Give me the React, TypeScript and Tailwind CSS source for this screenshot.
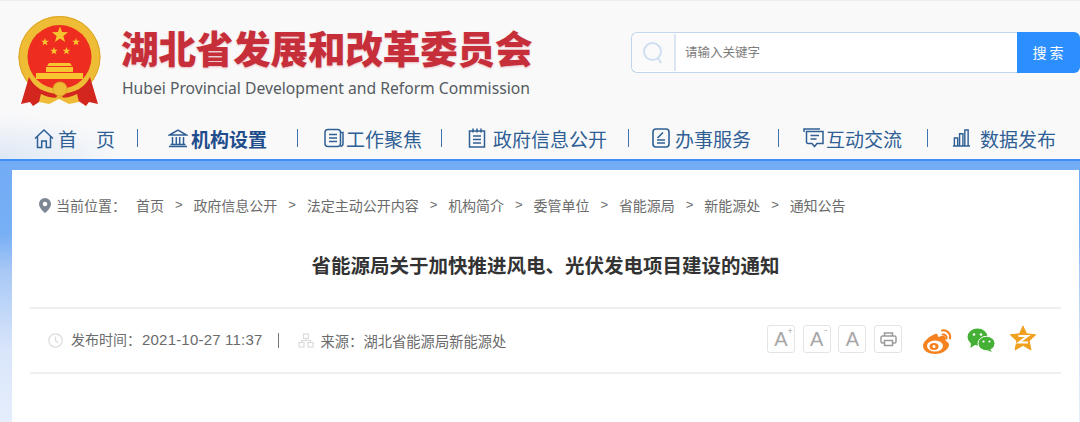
import React from 'react';

const cjk = '"Noto Sans CJK SC", sans-serif';
const latin = '"Liberation Sans", sans-serif';

const icons = {
  home: (
    <svg width="20" height="21" viewBox="0 0 20 21" fill="none" stroke="#2f5f94" strokeWidth="1.5">
      <path d="M1 10.500 10 2l9 8.500M3.500 8.500v11h4.200V13h4.600v6.500h4.200v-11" />
    </svg>
  ),
  bank: (
    <svg width="20" height="20" viewBox="0 0 20 20" fill="none" stroke="#2f5f94" strokeWidth="1.5">
      <path d="M1.500 7 10 2l8.500 5zM4.500 9v7M8.300 9v7M11.700 9v7M15.500 9v7M2.500 16.500h15M1 18.500h18" />
    </svg>
  ),
  doc: (
    <svg width="20" height="20" viewBox="0 0 20 20" fill="none" stroke="#2f5f94" strokeWidth="1.5">
      <rect x="1" y="1.500" width="15.500" height="17" rx="3" />
      <path d="M16.500 4.500H19v11a3 3 0 0 1-2.500 3M5 6.500h8M5 10h8M5 13.500h8" />
    </svg>
  ),
  list: (
    <svg width="18" height="20" viewBox="0 0 18 20" fill="none" stroke="#2f5f94" strokeWidth="1.5">
      <rect x="1.500" y="3" width="15" height="16" />
      <path d="M5 0.500v4M9 0.500v4M13 0.500v4M5 8h8M5 11.500h8M5 15h8" />
    </svg>
  ),
  edit: (
    <svg width="18" height="20" viewBox="0 0 18 20" fill="none" stroke="#2f5f94" strokeWidth="1.6">
      <rect x="1" y="1" width="16" height="18" rx="3" />
      <path d="M5 15h8M5 12h8M5.500 10 11 4.500" />
    </svg>
  ),
  chat: (
    <svg width="21" height="20" viewBox="0 0 21 20" fill="none" stroke="#2f5f94" strokeWidth="1.5">
      <path d="M1 4V1h16" />
      <path d="M3.500 3.500H20v12h-6l-2.500 3-2.500-3H5a1.500 1.500 0 0 1-1.500-1.500zM7.500 7.500h8.500M7.500 11h6" />
    </svg>
  ),
  bars: (
    <svg width="20" height="20" viewBox="0 0 20 20" fill="none" stroke="#2f5f94" strokeWidth="1.5">
      <path d="M1 18.500h18M2.500 18.500V10h3.500v8.500M8 18.500V5.500h3.500v13M13.500 18.500V1.500H17v17" />
    </svg>
  ),
};

const navItems = [
  { icon: icons.home, label: '首\u3000页', className: 'w-[104px] gap-[4px]' },
  { icon: icons.bank, label: '机构设置', className: 'w-[160px] pl-[30px] gap-[3px]', active: true },
  { icon: icons.doc, label: '工作聚焦', className: 'w-[144px] pl-[26px] gap-[2px]' },
  { icon: icons.list, label: '政府信息公开', className: 'w-[187px] pl-[26px] gap-[7px]' },
  { icon: icons.edit, label: '办事服务', className: 'w-[150px] pl-[23px] gap-[5px]' },
  { icon: icons.chat, label: '互动交流', className: 'w-[149px] pl-[24px] gap-[2px]' },
  { icon: icons.bars, label: '数据发布', className: 'w-[128px] pl-[24px] gap-[9px]' },
];

const crumbs = ['首页', '政府信息公开', '法定主动公开内容', '机构简介', '委管单位', '省能源局', '新能源处', '通知公告'];

const starPoints = (cx: number, cy: number, r: number) =>
  Array.from({ length: 10 }, (_, i) => {
    const a = (Math.PI / 5) * i - Math.PI / 2;
    const d = i % 2 === 0 ? r : r * 0.42;
    return `${cx + d * Math.cos(a)},${cy + d * Math.sin(a)}`;
  }).join(' ');

const Emblem = () => (
  <svg width="84" height="94" viewBox="0 0 84 94" className="shrink-0">
    <circle cx="42.500" cy="42" r="41" fill="#efbd35" />
    <circle cx="42.500" cy="42" r="40.500" fill="none" stroke="#dca326" />
    <circle cx="42.500" cy="42" r="32" fill="#ee2c1f" />
    <g fill="#f6c530">
      <polygon points={starPoints(43, 20, 8.5)} />
      <polygon points={starPoints(28, 27, 4)} />
      <polygon points={starPoints(59, 27, 4)} />
      <polygon points={starPoints(37, 36, 4)} />
      <polygon points={starPoints(49.5, 36, 4)} />
      <path d="M32 48h21l2 3H30zM29 52h27v5H29zM19 58h47v6H19z" />
    </g>
    <path d="M12 62c5 10 14 16 30 17l-8 9-9-3-9 6-3-4-9 2z" fill="#d3261f" />
    <path d="M73 62c-5 10-14 16-30 17l8 9 9-3 9 6 3-4 9 2z" fill="#d3261f" />
    <path d="M24 79c6 3 12 4 18 4s12-1 18-4l2 8-10 2-10-5-10 5-10-2z" fill="#efbd35" />
    <circle cx="43" cy="74" r="7" fill="#efbd35" stroke="#dca326" />
  </svg>
);

const FontBtn = ({ children }: { children: React.ReactNode }) => (
  <span className="w-[28px] h-[28px] border border-[#e4e4e4] rounded-[3px] flex items-center justify-center text-[#a6a6a6]">
    {children}
  </span>
);

export default function App() {
  return (
    <div className="w-[1080px] h-[422px] overflow-hidden bg-white" style={{ fontFamily: cjk }}>
      <header className="h-[159px] bg-[#f9f9fa] bg-[radial-gradient(ellipse_130px_45px_at_0%_100%,#dde8f5,transparent)] border-t border-[#eeeeee] flex flex-col">
        <div className="h-[108px] flex pl-[17px] pt-[14px]">
          <Emblem />
          <div className="ml-[20px] pt-[10px] w-[420px]">
            <h1 className="text-[37.5px] leading-[44px] font-black text-[#c62f3a] tracking-[-0.1px] whitespace-nowrap [text-shadow:0_1px_2px_rgba(200,45,56,0.3)]">
              湖北省发展和改革委员会
            </h1>
            <p
              className="mt-[9px] ml-px text-[15.7px] leading-[20px] text-[#555b60] whitespace-nowrap"
              style={{ fontFamily: '"Noto Sans", sans-serif' }}
            >
              Hubei Provincial Development and Reform Commission
            </p>
          </div>
          <div className="ml-[90px] mt-[17px] w-[449px] h-[41px] flex">
            <div className="flex-1 flex items-center bg-white border border-[#c3d5ea] border-r-0 rounded-l-[6px]">
              <div className="w-[44px] h-[37px] bg-[#fafafa] border-r-2 border-[#dce6f2] rounded-l-[6px] flex items-center justify-center">
                <svg width="22" height="24" viewBox="0 0 22 24" fill="none" stroke="#cfdff2" strokeWidth="2">
                  <circle cx="10.500" cy="10.500" r="8.500" />
                  <path d="m16 17 3 5" />
                </svg>
              </div>
              <span className="ml-[9px] text-[12.5px] text-[#7d7d7d]">请输入关键字</span>
            </div>
            <button className="w-[63px] bg-[#2c8fff] text-white text-[14px] tracking-[3px] rounded-r-[6px] pl-[2px]">
              搜索
            </button>
          </div>
        </div>
        <nav className="h-[50px] flex items-start pl-[34px] pt-[13px]">
          {navItems.map((item, i) => (
            <div
              key={item.label}
              className={`${item.className} h-[32px] flex items-center shrink-0 ${
                i < navItems.length - 1 ? 'relative' : ''
              }`}
            >
              {item.icon}
              <span
                className={`text-[19px] leading-none whitespace-pre ${
                  item.active ? 'font-bold text-[#1f4d8c]' : 'text-[#2f5f94]'
                }`}
              >
                {item.label}
              </span>
              {i < navItems.length - 1 && (
                <span className="absolute right-0 top-[7px] w-px h-[18px] bg-[#3f74ad]" />
              )}
            </div>
          ))}
        </nav>
      </header>

      <div className="border-t-2 border-[#3f90f2] bg-[linear-gradient(#72acf5_0%,#78aff5_28%,#a8c8f6_42%,#d8e5fa_72%,#e6eefc_100%)] pt-[9px] pl-[12px] pr-px h-[263px]">
        <main className="bg-white h-full px-[18px]">
          <div className="h-[70px] flex items-center pl-[9px] text-[14px] text-[#6b6b6b]">
            <svg width="12" height="15" viewBox="0 0 12 15" className="mr-[5px]">
              <path d="M6 0a6 6 0 0 1 6 6c0 3.500-3.500 7-6 9-2.500-2-6-5.500-6-9a6 6 0 0 1 6-6z" fill="#7d8793" />
              <circle cx="6" cy="6" r="2.300" fill="#fff" />
            </svg>
            <span>当前位置：</span>
            <div className="flex items-center ml-[10px] gap-[10.9px]">
              {crumbs.map((c, i) => (
                <React.Fragment key={c}>
                  {i > 0 && (
                    <span className="text-[13px]" style={{ fontFamily: latin }}>
                      &gt;
                    </span>
                  )}
                  <span>{c}</span>
                </React.Fragment>
              ))}
            </div>
          </div>
          <h2 className="text-[19.5px] leading-[26px] mt-[12px] font-bold text-[#333333] text-center whitespace-nowrap">
            省能源局关于加快推进风电、光伏发电项目建设的通知
          </h2>
          <div className="mt-[29px] h-[67px] border-y-2 border-[#efefef] flex items-center pl-[18px] text-[14px] text-[#6b6b6b]">
            <svg width="15" height="15" viewBox="0 0 15 15" fill="none" stroke="#dcdcdc" strokeWidth="1.2">
              <circle cx="7.500" cy="7.500" r="6.700" />
              <path d="M7.500 3.500v4.300l2.500 2" />
            </svg>
            <span className="ml-[8px] whitespace-pre">
              发布时间：
              <span style={{ fontFamily: latin }} className="ml-px text-[15px] tracking-[0.2px]">
                2021-10-27 11:37
              </span>
            </span>
            <span className="ml-[15px] w-px h-[15px] bg-[#777777]" />
            <svg width="16" height="15" viewBox="0 0 16 15" fill="none" stroke="#dcdcdc" strokeWidth="1.2" className="ml-[19px]">
              <rect x="5.500" y="1" width="5" height="4.500" />
              <rect x="1" y="9.500" width="5" height="4.500" />
              <rect x="10" y="9.500" width="5" height="4.500" />
              <path d="M8 5.500v2M3.500 9.500v-2h9v2" />
            </svg>
            <span className="ml-[7px] text-[14.3px]">来源：湖北省能源局新能源处</span>
            <div className="ml-auto flex items-center pr-[25px]">
              <div className="flex gap-[7.67px] -mt-[3px]">
                <FontBtn>
                  <span className="text-[20px] leading-none relative" style={{ fontFamily: latin }}>
                    A<span className="absolute -right-[5px] -top-[2px] text-[9px]">+</span>
                  </span>
                </FontBtn>
                <FontBtn>
                  <span className="text-[20px] leading-none relative" style={{ fontFamily: latin }}>
                    A<span className="absolute -right-[4px] -top-[3px] text-[9px]">-</span>
                  </span>
                </FontBtn>
                <FontBtn>
                  <span className="text-[20px] leading-none" style={{ fontFamily: latin }}>
                    A
                  </span>
                </FontBtn>
                <FontBtn>
                  <svg width="17" height="15" viewBox="0 0 17 15" fill="none" stroke="#9a9a9a" strokeWidth="1.5">
                    <path d="M4.500 4V1h8v3" />
                    <path d="M4 11H2.500a1.500 1.500 0 0 1-1.500-1.500V5.500A1.500 1.500 0 0 1 2.500 4h12A1.500 1.500 0 0 1 16 5.500v4a1.500 1.500 0 0 1-1.500 1.500H13" />
                    <path d="M4.500 8.500h8v5h-8z" />
                  </svg>
                </FontBtn>
              </div>
              <svg width="31" height="26" viewBox="0 0 31 26" className="ml-[20px]">
                <path d="M13 6C6 9 1 14 1 18c0 5 6 8 12 8 8 0 14-5 14-9 0-3-3-3.500-3.500-4.500 1-3 0-5-4-4.500L16 9c0-3-1-4-3-3z" fill="#f5811f" />
                <ellipse cx="13" cy="18" rx="8" ry="5.500" fill="#fff" />
                <ellipse cx="12" cy="18.500" rx="4.500" ry="3.500" fill="#f5811f" />
                <circle cx="12" cy="18.500" r="1.500" fill="#fff" />
                <path d="M20 2.500c5-1 9 3 8 8M20.500 6.500c2.500-.5 4.500 1.500 4 4" fill="none" stroke="#f5811f" strokeWidth="2" strokeLinecap="round" />
              </svg>
              <svg width="28" height="24" viewBox="0 0 28 24" className="ml-[14px] -mt-px">
                <ellipse cx="10.500" cy="9" rx="10" ry="8.500" fill="#44b035" />
                <path d="M4 14 3.500 20l5-3.500z" fill="#44b035" />
                <ellipse cx="19.500" cy="15.500" rx="8.500" ry="7.200" fill="#44b035" stroke="#fff" strokeWidth="1" />
                <path d="M23 21l2 3-5-2z" fill="#44b035" />
                <circle cx="7" cy="6.500" r="1.300" fill="#fff" />
                <circle cx="14" cy="6.500" r="1.300" fill="#fff" />
                <circle cx="16.500" cy="13.500" r="1.100" fill="#fff" />
                <circle cx="22.500" cy="13.500" r="1.100" fill="#fff" />
              </svg>
              <svg width="26" height="25" viewBox="0 0 26 25" className="ml-[15px] -mt-[5px]">
                <path d="M13 0l3.500 7.800 9.200 1-6.600 6.200 1.900 9-8-4.700L5 24l1.900-9L.3 8.800l9.200-1z" fill="#f0a01e" stroke="#f0a01e" strokeWidth="1" strokeLinejoin="round" />
                <path d="M8.500 10h9L9 16.500h9" fill="none" stroke="#fff" strokeWidth="2.2" />
              </svg>
            </div>
          </div>
        </main>
      </div>
    </div>
  );
}
